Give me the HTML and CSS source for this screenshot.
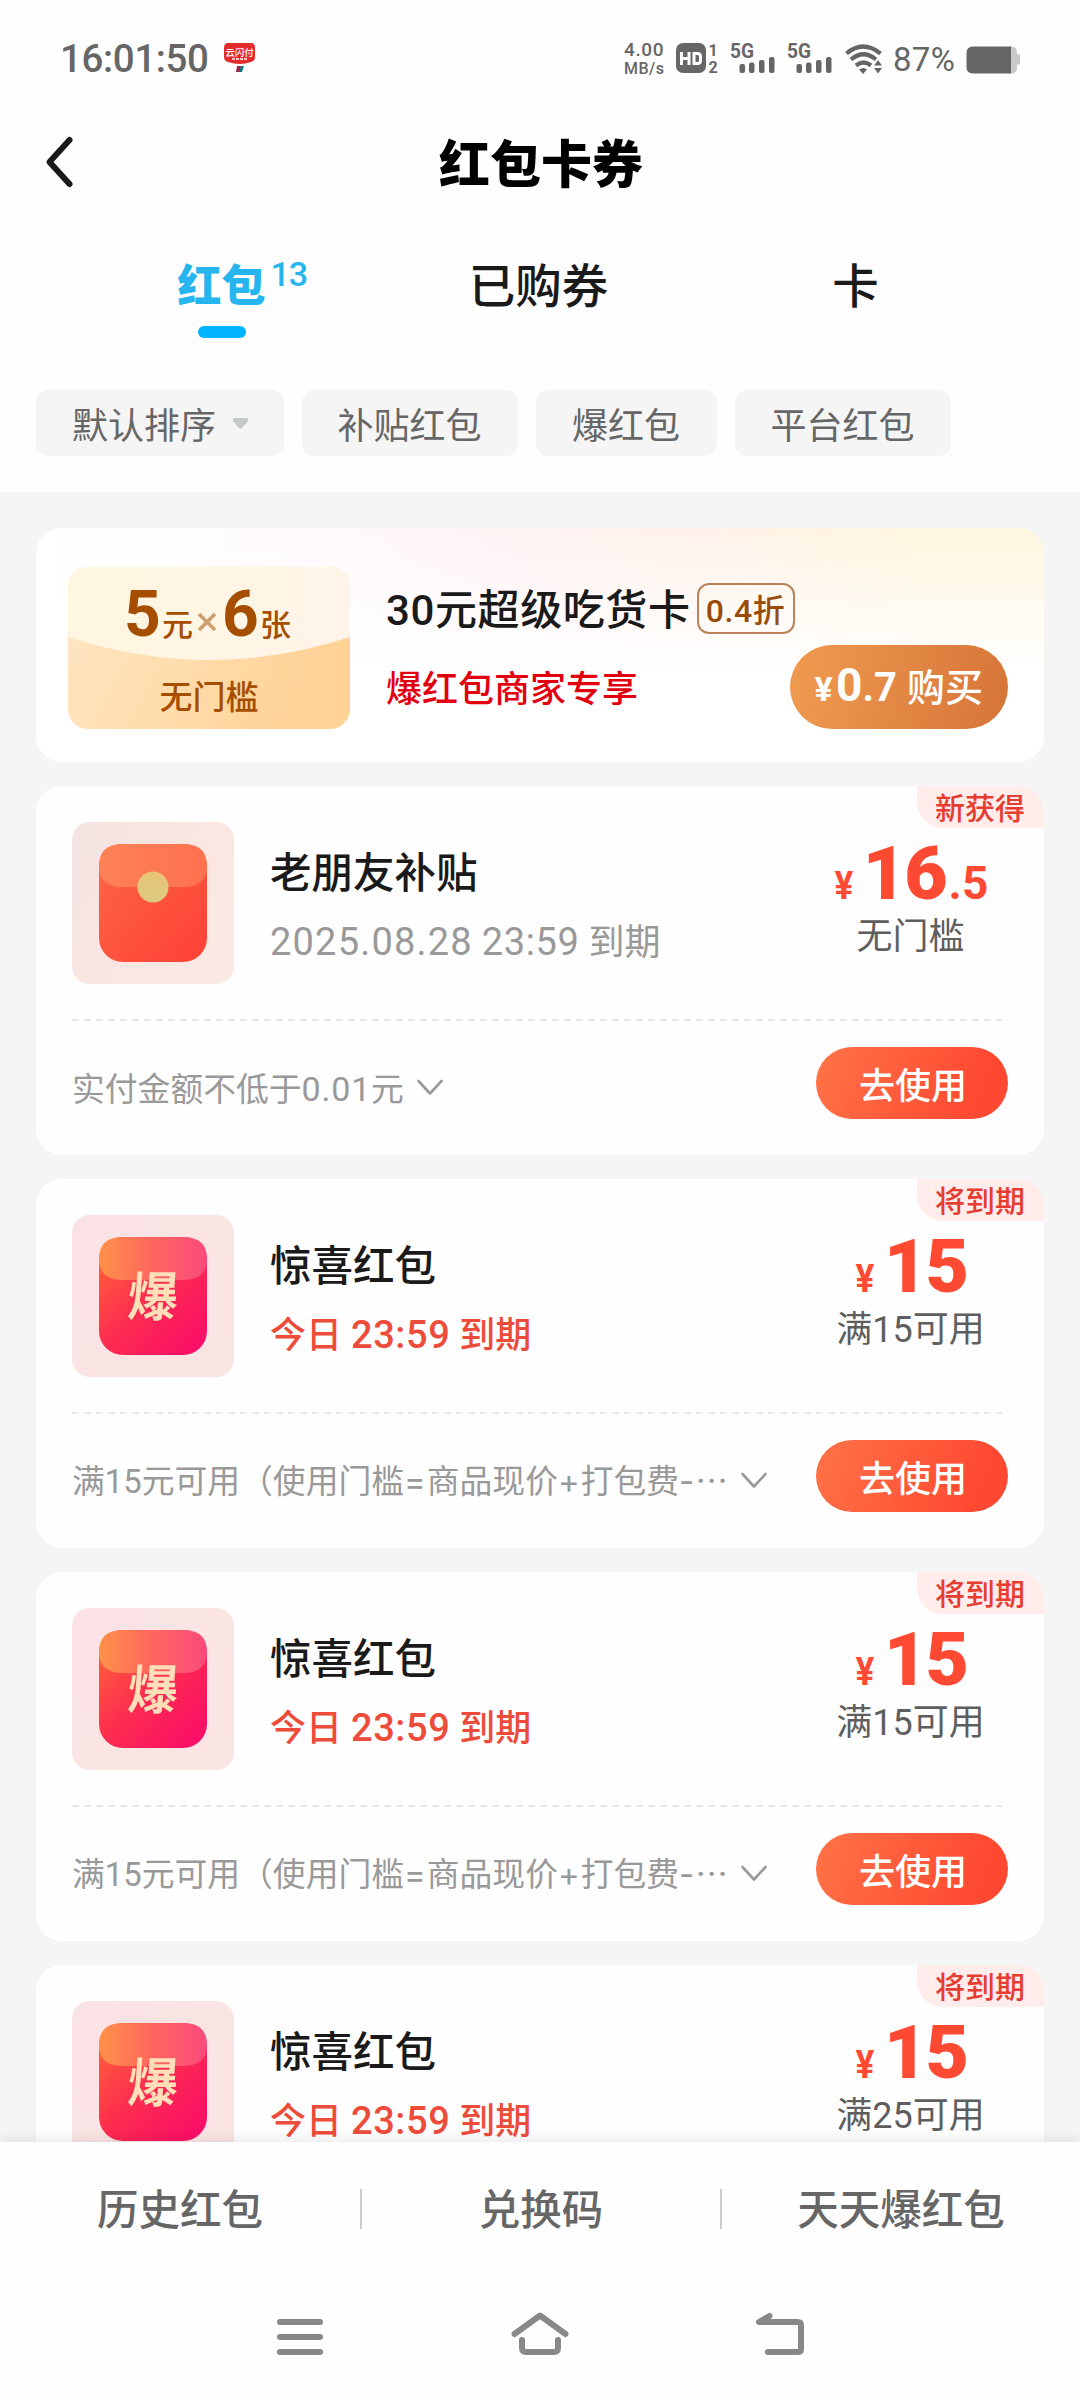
FILE: index.html
```html
<!DOCTYPE html>
<html lang="zh-CN">
<head>
<meta charset="utf-8">
<title>红包卡券</title>
<link rel="stylesheet" href="styles.css">
</head>
<body>
<svg class="defs" width="0" height="0" aria-hidden="true">
  <defs>
    <linearGradient id="redBody" x1="0" y1="0" x2="1" y2="1"><stop offset="0" stop-color="#fb6845"/><stop offset="1" stop-color="#ff4037"/></linearGradient>
    <linearGradient id="redFlap" x1="0" y1="0" x2="1" y2="0"><stop offset="0" stop-color="#fe8156"/><stop offset="1" stop-color="#ff7150"/></linearGradient>
    <linearGradient id="gold" x1="0" y1="0" x2="0" y2="1"><stop offset="0" stop-color="#e8c478"/><stop offset="1" stop-color="#dccb80"/></linearGradient>
    <linearGradient id="baoBody" x1="0" y1="0" x2="1" y2="1"><stop offset="0" stop-color="#ff6a35"/><stop offset=".5" stop-color="#fc2b50"/><stop offset="1" stop-color="#fa0a6c"/></linearGradient>
    <linearGradient id="baoFlap" x1="0" y1="0" x2="1" y2="0"><stop offset="0" stop-color="#ff9147"/><stop offset=".5" stop-color="#ff6560"/><stop offset="1" stop-color="#f94a7c"/></linearGradient>
    <symbol id="envelope" viewBox="0 0 162 162">
      <rect x="27" y="22" width="108" height="118" rx="24" fill="url(#redBody)"/>
      <path d="M51 22h60q24 0 24 22 0 21-24 21H51Q27 65 27 44q0-22 24-22z" fill="url(#redFlap)"/>
      <circle cx="81" cy="65" r="15.5" fill="url(#gold)"/>
    </symbol>
    <symbol id="bao" viewBox="0 0 162 162">
      <rect x="27" y="22" width="108" height="118" rx="24" fill="url(#baoBody)"/>
      <path d="M51 22h60q24 0 24 22 0 21-24 21H51Q27 65 27 44q0-22 24-22z" fill="url(#baoFlap)"/>
    </symbol>
    <symbol id="chev" viewBox="0 0 26 17"><path d="M1.5 2 13 14.5 24.500 2" fill="none" stroke="#999" stroke-width="2.6" stroke-linecap="round" stroke-linejoin="round"/></symbol>
  </defs>
</svg>
<div class="screen">
  <header class="head">
    <div class="status">
      <span class="clock">16:01:50</span>
      <svg class="pay" width="31" height="30" viewBox="0 0 31 30"><path d="M4 0h23q4 0 4 5v9q0 4-4 5-11 4-23 0-4-1-4-5V5q0-5 4-5z" fill="#e32b2b"/><text x="15.500" y="12.500" text-anchor="middle" class="paytext">云闪付</text><path d="M8 16h15" stroke="#fff" stroke-width="1.500" stroke-dasharray="3 1"/><path d="M13 23h4l-1 6h-4z" fill="#a01f48"/><path d="M17 23h3l-2 6h-3z" fill="#087a80"/></svg>
      <span class="speed"><b>4.00</b><b>MB/s</b></span>
      <svg class="hd" width="43" height="30" viewBox="0 0 43 30"><rect width="30" height="30" rx="7" fill="#666"/><path d="M5.500 9v13M13 9v13M5.500 15.500H13M18 10.500h3.500q3 0 3 3v4q0 3-3 3H18z" fill="none" stroke="#fff" stroke-width="3"/><text x="37" y="12.500" text-anchor="middle" class="mini">1</text><text x="37" y="29.500" text-anchor="middle" class="mini">2</text></svg>
      <svg class="sig" width="45" height="30" viewBox="0 0 45 30"><text x="0" y="15" class="gen" textLength="24" lengthAdjust="spacingAndGlyphs">5G</text><g fill="#666"><rect x="9.500" y="21" width="5.500" height="9" rx="2"/><rect x="19" y="19.500" width="5.500" height="10.500" rx="2"/><rect x="29" y="17" width="5.500" height="13" rx="2"/><rect x="39" y="14" width="5.500" height="16" rx="2"/></g></svg>
      <svg class="sig2" width="45" height="30" viewBox="0 0 45 30"><text x="0" y="15" class="gen" textLength="24" lengthAdjust="spacingAndGlyphs">5G</text><g fill="#666"><rect x="9.500" y="21" width="5.500" height="9" rx="2"/><rect x="19" y="19.500" width="5.500" height="10.500" rx="2"/><rect x="29" y="17" width="5.500" height="13" rx="2"/><rect x="39" y="14" width="5.500" height="16" rx="2"/></g></svg>
      <svg class="wifi" width="37" height="30" viewBox="0 0 37 30"><g fill="none" stroke="#666" stroke-width="4.200"><path d="M1.500 9.500q16.500-14 34 0"/><path d="M6 15.500q12.500-10.500 25 0"/><path d="M11 21.500q7.500-6 15 0"/></g><path d="M14 25.500q4.500-3 8 0L18 30zM29 21.500l4-5.500 4 5.500zM29 24l4 5.500 4-5.500z" fill="#666"/></svg>
      <span class="pct">87%</span>
      <svg class="batt" width="54" height="28" viewBox="0 0 54 28"><path d="M43 .5h2q6 0 6 6v2h3v10h-3v3q0 6-6 6h-2z" fill="#c9c9c9"/><path d="M7 .5h38v27H7q-6.500 0-6.500-6.500V7Q.5.5 7 .5z" fill="#666"/></svg>
    </div>
    <div class="titlebar">
      <svg class="back" width="32" height="54" viewBox="0 0 32 54"><path d="M25.500 5 5.500 27 25.500 49" fill="none" stroke="#1a1a1a" stroke-width="6" stroke-linecap="round" stroke-linejoin="round"/></svg>
      <h1>红包卡券</h1>
    </div>
    <nav class="tabs">
      <a class="tab on"><span>红包<sup>13</sup></span></a>
      <a class="tab"><span>已购券</span></a>
      <a class="tab"><span>卡</span></a>
    </nav>
    <div class="chips">
      <span class="chip">默认排序<svg width="17" height="13" viewBox="0 0 17 13"><path d="M2 1h13q2 1 1 3l-6 7q-1.500 1.500-3 0L1 4Q0 2 2 1z" fill="#c5c9c8"/></svg></span>
      <span class="chip">补贴红包</span>
      <span class="chip">爆红包</span>
      <span class="chip">平台红包</span>
    </div>
  </header>
  <main class="list">
    <section class="promo">
      <div class="ticket">
        <svg class="ticketbg" width="282" height="162" viewBox="0 0 282 162"><defs><linearGradient id="tk" x1="0" y1="0" x2="1" y2=".3"><stop offset="0" stop-color="#fee8c6"/><stop offset="1" stop-color="#ffd296"/></linearGradient><linearGradient id="tt" x1="0" y1="0" x2="1" y2="0"><stop offset="0" stop-color="#fff6e0"/><stop offset="1" stop-color="#fff4e8"/></linearGradient></defs><rect width="282" height="162" fill="url(#tk)"/><path d="M0 0h282v70q-141 46-282 0z" fill="url(#tt)"/></svg>
        <div class="worth"><b>5</b><i>元</i><svg width="20" height="20" viewBox="0 0 20 20"><path d="M2 2l16 16M18 2 2 18" stroke="#cf9f70" stroke-width="3.600"/></svg><b>6</b><i>张</i></div>
        <div class="free">无门槛</div>
      </div>
      <div class="ptext">
        <div class="pname"><span>30元超级吃货卡</span><em>0.4折</em></div>
        <div class="psub">爆红包商家专享</div>
      </div>
      <button class="buy"><i>¥</i><b>0</b><s>.7</s><span>购买</span></button>
    </section>

    <section class="card">
      <span class="tag">新获得</span>
      <div class="top">
        <div class="thumb old"><svg width="162" height="162"><use href="#envelope"/></svg></div>
        <div class="info"><h2>老朋友补贴</h2><p class="date"><span class="day">2025.08.28</span> <span>23:59</span> 到期</p></div>
        <div class="price"><div class="num"><i>¥</i><b>16</b><s>.5</s></div><p>无门槛</p></div>
      </div>
      <div class="dash"></div>
      <div class="foot"><span class="rule">实付金额不低于<u>0.01</u>元</span><svg class="chev" width="26" height="17"><use href="#chev"/></svg><button class="use">去使用</button></div>
    </section>

    <section class="card">
      <span class="tag">将到期</span>
      <div class="top">
        <div class="thumb"><svg width="162" height="162"><use href="#bao"/></svg><span class="baotext">爆</span></div>
        <div class="info"><h2>惊喜红包</h2><p class="date soon">今日 <span>23:59</span> 到期</p></div>
        <div class="price"><div class="num"><i>¥</i><b>15</b></div><p>满15可用</p></div>
      </div>
      <div class="dash"></div>
      <div class="foot"><span class="rule">满15元可用（使用门槛<s>=</s>商品现价<s>+</s>打包费<s>-</s>⋯</span><svg class="chev" width="26" height="17"><use href="#chev"/></svg><button class="use">去使用</button></div>
    </section>

    <section class="card">
      <span class="tag">将到期</span>
      <div class="top">
        <div class="thumb"><svg width="162" height="162"><use href="#bao"/></svg><span class="baotext">爆</span></div>
        <div class="info"><h2>惊喜红包</h2><p class="date soon">今日 <span>23:59</span> 到期</p></div>
        <div class="price"><div class="num"><i>¥</i><b>15</b></div><p>满15可用</p></div>
      </div>
      <div class="dash"></div>
      <div class="foot"><span class="rule">满15元可用（使用门槛<s>=</s>商品现价<s>+</s>打包费<s>-</s>⋯</span><svg class="chev" width="26" height="17"><use href="#chev"/></svg><button class="use">去使用</button></div>
    </section>

    <section class="card">
      <span class="tag">将到期</span>
      <div class="top">
        <div class="thumb"><svg width="162" height="162"><use href="#bao"/></svg><span class="baotext">爆</span></div>
        <div class="info"><h2>惊喜红包</h2><p class="date soon">今日 <span>23:59</span> 到期</p></div>
        <div class="price"><div class="num"><i>¥</i><b>15</b></div><p>满25可用</p></div>
      </div>
    </section>
  </main>
  <footer class="bottom">
    <div class="links"><a>历史红包</a><a>兑换码</a><a>天天爆红包</a></div>
    <div class="sysnav">
      <svg width="60" height="60" viewBox="0 0 60 60"><path d="M10 15h40M10 30h40M10 45h40" stroke="#888" stroke-width="6" stroke-linecap="round"/></svg>
      <svg width="60" height="60" viewBox="0 0 60 60"><path d="M4.500 27 30 8.500 55.500 27" fill="none" stroke="#888" stroke-width="6" stroke-linecap="round" stroke-linejoin="round"/><path d="M12 33v8q0 4 4 4h28q4 0 4-4v-8" fill="none" stroke="#888" stroke-width="6" stroke-linecap="round"/></svg>
      <svg width="60" height="60" viewBox="0 0 60 60"><path d="M19.500 9 9 15h39q3 0 3 3v24q0 3-3 3H18" fill="none" stroke="#888" stroke-width="6" stroke-linecap="round" stroke-linejoin="round"/></svg>
    </div>
  </footer>
</div>
</body>
</html>
```
FILE: styles.css
```css
* { box-sizing: border-box; margin: 0; padding: 0; }
body { width: 1080px; height: 2400px; overflow: hidden; background: #f5f5f5; color: #1a1a1a; font-family: Roboto, "Noto Sans CJK SC", sans-serif; }
.defs { position: absolute; }
i, em { font-style: normal; }
s, u { text-decoration: none; }
svg { display: block; flex: none; overflow: visible; }
button { border: 0; font: inherit; color: #fff; }
.screen { display: flex; flex-direction: column; height: 2400px; overflow: hidden; }

.head { flex: none; height: 492px; background: #fefefe; }
.status { display: flex; align-items: flex-start; height: 110px; padding: 43px 0 0 60px; color: #666; }
.clock { width: 150px; font-size: 38.500px; line-height: 31px; font-weight: 500; letter-spacing: -.4px; white-space: nowrap; }
.pay { margin-left: 14px; }
.paytext { font: 500 9.500px "Noto Sans CJK SC"; fill: #fff; }
.speed { display: flex; flex-direction: column; width: 42px; margin-left: 369px; margin-top: -3px; }
.speed b { font-weight: 500; font-size: 19px; line-height: 20px; letter-spacing: .6px; }
.speed b + b { font-size: 16px; line-height: 17px; letter-spacing: .5px; }
.hd { margin-left: 10px; }
.mini { font: 700 16px Roboto; fill: #666; }
.gen { font: 700 20px Roboto; fill: #666; }
.sig { margin-left: 11px; }
.sig2 { margin-left: 12px; }
.wifi { margin-left: 13px; margin-top: 1px; }
.pct { width: 64px; margin-left: 11px; font-size: 33px; line-height: 34px; letter-spacing: .3px; }
.batt { margin: 3px 0 0 9px; }
.titlebar { display: grid; grid-template-columns: 80px 1fr 80px; align-items: center; height: 108px; }
.back { margin: -4px 0 0 44px; }
h1 { text-align: center; font-size: 51px; line-height: 60px; padding: 3px 0 0 2px; font-weight: 900; color: #000; }
.tabs { display: grid; grid-template-columns: repeat(3, 317px); height: 172px; padding: 36px 63px 0; }
.tab { display: flex; flex-direction: column; align-items: center; font-size: 46.500px; line-height: 66px; font-weight: 500; }
.tab span { position: relative; }
.tab.on { color: #27b5f0; font-size: 44px; font-weight: 900; }
.tab.on::after { content: ""; width: 48px; height: 12px; margin-top: 6px; border-radius: 6px; background: #00b4ff; }
.tab sup { position: absolute; left: 93px; top: -3px; font-size: 34px; line-height: 46px; font-weight: 500; letter-spacing: -1px; }
.chips { display: flex; gap: 18px; padding-left: 36px; }
.chip { display: flex; align-items: center; gap: 16px; height: 66px; padding: 0 36.500px 0 36px; border-radius: 12px; background: #f5f5f5; font-size: 36px; color: #666; white-space: nowrap; }
.chip svg { margin-right: -2px; }

.list { flex: 1; min-height: 0; display: flex; flex-direction: column; gap: 24px; padding: 36px 36px 0; overflow: hidden; }
.promo { flex: none; display: flex; height: 234px; padding: 39px 36px 0 32px; border-radius: 26px; background: linear-gradient(180deg, rgba(255,255,255,0) 0%, #fff 62%), linear-gradient(90deg, #fff 0%, #fffafb 28%, #fff2f3 48%, #fff2e9 68%, #fff6de 88%); }
.ticket { position: relative; width: 282px; height: 162px; border-radius: 20px; overflow: hidden; color: #a54e00; }
.ticketbg { position: absolute; inset: 0; }
.worth { position: relative; display: flex; align-items: baseline; height: 92px; padding: 10px 0 0 56px; }
.worth b { width: 34px; font-size: 64px; line-height: 76px; font-weight: 700; text-align: center; }
.worth i { font-size: 31px; line-height: 40px; font-weight: 500; margin-left: 4px; }
.worth svg { margin: 0 5px 0 4px; transform: translateY(-4px); }
.free { position: relative; padding-top: 16px; text-align: center; font-size: 33px; line-height: 46px; font-weight: 500; }
.ptext { width: 403px; flex: none; padding-left: 36px; }
.pname { display: flex; align-items: center; gap: 6px; margin-top: 11px; height: 60px; font-size: 42px; letter-spacing: .6px; font-weight: 500; white-space: nowrap; }
.pname > span { margin-top: -3px; }
.pname em { flex: none; display: grid; place-items: center; width: 98px; height: 51px; border: 2px solid #b98258; border-radius: 12px; font-size: 32px; font-weight: 500; color: #984c08; }
.psub { margin-top: 26px; font-size: 36px; line-height: 52px; font-weight: 500; color: #e20010; white-space: nowrap; }
.buy { display: flex; align-items: baseline; flex: none; width: 218px; height: 84px; margin: 78px 0 0 37px; padding: 12px 0 0 21px; border-radius: 42px; background: linear-gradient(100deg, #f09b50, #d67438); white-space: nowrap; }
.buy i { width: 25px; font-size: 34px; font-weight: 700; }
.buy b { font-size: 46px; line-height: 56px; font-weight: 700; }
.buy s { font-size: 40px; font-weight: 700; letter-spacing: 0; }
.buy span { margin-left: 10px; font-size: 38px; line-height: 56px; font-weight: 500; }

.card { position: relative; flex: none; height: 369px; padding: 36px 36px 0; border-radius: 26px; background: #fefefe; }
.tag { position: absolute; right: 0; top: 0; width: 127px; height: 42px; padding-left: 18px; border-radius: 0 26px 0 26px; background: #ffeceb; font-size: 30px; line-height: 46px; font-weight: 500; color: #e73c30; }
.top { display: flex; height: 162px; }
.thumb { position: relative; width: 162px; height: 162px; border-radius: 18px; background: linear-gradient(120deg, #fae1e6, #fbe5e3 60%, #fbe4e4); overflow: hidden; }
.thumb.old { background: linear-gradient(120deg, #f2e3e1, #fbe6e1 55%, #fbe9e5); }
.baotext { position: absolute; left: 56px; top: 47px; font-size: 50px; line-height: 72px; font-weight: 700; color: #ffdfb8; transform: skewX(-4deg) scaleY(1.06); }
.info { width: 500px; padding: 19px 0 0 36px; }
h2 { font-size: 41.500px; line-height: 66px; font-weight: 500; }
.date { margin-top: 12px; font-size: 36px; line-height: 48px; color: #999; white-space: nowrap; }
.date span { font-size: 38px; line-height: 44px; letter-spacing: .6px; }
.date .day { letter-spacing: 1.200px; }
.date.soon { color: #ee4c3b; font-weight: 500; }
.price { width: 196px; margin-left: auto; padding-left: 1px; text-align: center; }
.num { display: flex; align-items: baseline; justify-content: center; height: 88px; color: #ff4a33; font-weight: 700; }
.num i { font-size: 39px; width: 30px; text-align: left; font-weight: 700; transform: scaleX(.9); }
.num b { font-size: 75px; line-height: 102px; letter-spacing: -2px; }
.num s { font-size: 46px; margin-left: 3px; }
.price p { font-size: 36px; line-height: 54px; color: #5e5e5e; }
.dash { height: 2px; margin: 35px 0 26px; background: repeating-linear-gradient(90deg, #e8e8e8 0 7px, transparent 7px 12px); width: 930px; }
.foot { display: flex; align-items: center; height: 74px; }
.rule { font-size: 32.800px; line-height: 50px; color: #999; white-space: nowrap; padding-top: 10px; }
.rule u { font-size: 34px; letter-spacing: .8px; }
.rule s { font-family: Inter, sans-serif; line-height: 40px; letter-spacing: 1px; }
.chev { margin: 6px 0 0 13px; }
.use { width: 192px; height: 72px; margin: 0 0 2px auto; padding-left: 2px; border-radius: 36px; background: linear-gradient(110deg, #ff7347, #ff4831 85%); font-size: 36px; font-weight: 500; }

.bottom { position: relative; flex: none; height: 258px; background: #fefefe; box-shadow: 0 -2px 14px rgba(0,0,0,.09); }
.links { display: grid; grid-template-columns: 362px 360px 358px; padding-top: 47px; }
.links a { height: 40px; border-right: 2px solid #ccc; text-align: center; font-size: 41.500px; line-height: 44px; font-weight: 500; color: #666; }
.links a:last-child { border: 0; }
.sysnav { display: flex; justify-content: center; gap: 180px; padding-top: 78px; }
```
